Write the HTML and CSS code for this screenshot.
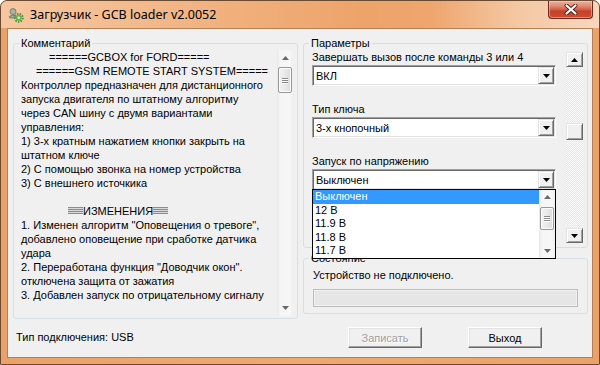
FILE: index.html
```html
<!DOCTYPE html>
<html lang="ru">
<head>
<meta charset="utf-8">
<title>Загрузчик - GCB loader v2.0052</title>
<link rel="stylesheet" href="styles.css">
</head>
<body>
<div class="window">
  <div class="titlebar">
    <svg class="app-icon" width="16" height="16" viewBox="0 0 16 16">
      <circle cx="5" cy="4.6" r="3" fill="#a7b3a4" stroke="#66745f" stroke-width="0.8"/>
      <path d="M1.2 9.5 Q5 6.8 8.4 9.2 L7.6 11 L1.6 11 Z" fill="#97a593" stroke="#66745f" stroke-width="0.7"/>
      <circle cx="10.8" cy="10.8" r="3.8" fill="none" stroke="#4e9a36" stroke-width="2.4" stroke-dasharray="1.5 1.1"/>
      <circle cx="10.8" cy="10.8" r="3" fill="#6db34d"/>
      <circle cx="10.8" cy="10.8" r="1.2" fill="#eef4e6"/>
    </svg>
    <span class="title">Загрузчик - GCB loader v2.0052</span>
    <div class="close-btn">
      <svg width="14" height="11" viewBox="0 0 14 11">
        <path d="M2.5 1.5 L11.5 9.5 M11.5 1.5 L2.5 9.5" stroke="#5a2114" stroke-width="4" stroke-linecap="round"/>
        <path d="M2.5 1.5 L11.5 9.5 M11.5 1.5 L2.5 9.5" stroke="#ffffff" stroke-width="2.2" stroke-linecap="round"/>
      </svg>
    </div>
  </div>
  <div class="client">
    <div class="col-left">
      <fieldset class="group group-comment">
        <legend>Комментарий</legend>
        <div class="memo">
          <div class="memo-text">
            <div class="ind1">======GCBOX for FORD=====</div>
            <div class="ind2">======GSM REMOTE START SYSTEM=====</div>
            <div>Контроллер предназначен для дистанционного</div>
            <div>запуска двигателя по штатному алгоритму</div>
            <div>через CAN шину с двумя вариантами</div>
            <div>управления:</div>
            <div>1) 3-х кратным нажатием кнопки закрыть на</div>
            <div>штатном ключе</div>
            <div>2) С помощью звонка на номер устройства</div>
            <div>3) С внешнего источкика</div>
            <div class="blank"></div>
            <div class="ind3"><span class="hatch"></span>ИЗМЕНЕНИЯ<span class="hatch"></span></div>
            <div>1. Изменен алгоритм "Оповещения о тревоге",</div>
            <div>добавлено оповещение при сработке датчика</div>
            <div>удара</div>
            <div>2. Переработана функция "Доводчик окон".</div>
            <div>отключена защита от зажатия</div>
            <div>3. Добавлен запуск по отрицательному сигналу</div>
          </div>
          <div class="tscroll memo-scroll">
            <div class="tarrow"><svg width="7" height="4" viewBox="0 0 7 4"><polygon points="0,4 3.5,0 7,4" fill="#6a6a6a"/></svg></div>
            <div class="ttrack"><div class="tthumb memo-thumb"><span></span><span></span><span></span></div></div>
            <div class="tarrow"><svg width="7" height="4" viewBox="0 0 7 4"><polygon points="0,0 7,0 3.5,4" fill="#6a6a6a"/></svg></div>
          </div>
        </div>
      </fieldset>
      <div class="conn">Тип подключения: USB</div>
    </div>

    <div class="col-right">
      <fieldset class="group group-params">
        <legend>Параметры</legend>
        <div class="scrollbox">
          <div class="params">
            <div class="field">
              <div class="field-label">Завершать вызов после команды 3 или 4</div>
              <div class="combo"><span class="combo-text">ВКЛ</span><span class="drop-btn"><svg width="7" height="4" viewBox="0 0 7 4"><polygon points="0,0 7,0 3.5,4" fill="#000"/></svg></span></div>
            </div>
            <div class="field">
              <div class="field-label">Тип ключа</div>
              <div class="combo"><span class="combo-text">3-х кнопочный</span><span class="drop-btn"><svg width="7" height="4" viewBox="0 0 7 4"><polygon points="0,0 7,0 3.5,4" fill="#000"/></svg></span></div>
            </div>
            <div class="field">
              <div class="field-label">Запуск по напряжению</div>
              <div class="combo open"><span class="combo-text">Выключен</span><span class="drop-btn"><svg width="7" height="4" viewBox="0 0 7 4"><polygon points="0,0 7,0 3.5,4" fill="#000"/></svg></span>
                <div class="droplist">
                  <div class="items">
                    <div class="item selected">Выключен</div>
                    <div class="item">12 В</div>
                    <div class="item">11.9 В</div>
                    <div class="item">11.8 В</div>
                    <div class="item">11.7 В</div>
                  </div>
                  <div class="tscroll list-scroll">
                    <div class="tarrow"><svg width="7" height="4" viewBox="0 0 7 4"><polygon points="0,4 3.5,0 7,4" fill="#6a6a6a"/></svg></div>
                    <div class="ttrack"><div class="tthumb list-thumb"><span></span><span></span><span></span></div></div>
                    <div class="tarrow"><svg width="7" height="4" viewBox="0 0 7 4"><polygon points="0,0 7,0 3.5,4" fill="#6a6a6a"/></svg></div>
                  </div>
                </div>
              </div>
            </div>
          </div>
          <div class="cscroll">
            <div class="cbtn"><svg width="7" height="4" viewBox="0 0 7 4"><polygon points="0,4 3.5,0 7,4" fill="#000"/></svg></div>
            <div class="ctrack"><div class="cthumb"></div></div>
            <div class="cbtn"><svg width="7" height="4" viewBox="0 0 7 4"><polygon points="0,0 7,0 3.5,4" fill="#000"/></svg></div>
          </div>
        </div>
      </fieldset>

      <fieldset class="group group-state">
        <legend>Состояние</legend>
        <div class="state-text">Устройство не подключено.</div>
        <div class="progress"></div>
      </fieldset>

      <div class="buttons">
        <div class="btn disabled">Записать</div>
        <div class="btn">Выход</div>
      </div>
    </div>
  </div>
</div>
</body>
</html>
```

FILE: styles.css
```css
html, body {
  margin: 0;
  padding: 0;
}
body {
  width: 600px;
  height: 365px;
  overflow: hidden;
  font-family: "Liberation Sans", Arial, sans-serif;
  font-size: 11px;
  color: #000;
  background: #ffffff;
}

/* ---------- window frame ---------- */
.window {
  box-sizing: border-box;
  width: 600px;
  height: 365px;
  border: 1px solid #6a4a30;
  border-radius: 7px 7px 0 0;
  background: linear-gradient(90deg, #eba26a 0%, #eea86f 50%, #eba26a 100%);
  display: flex;
  flex-direction: column;
  overflow: hidden;
}
.titlebar {
  height: 27px;
  flex: none;
  display: flex;
  align-items: flex-start;
  background: linear-gradient(90deg, #f6c7a0 0%, #f3bc8f 20%, #f0af7b 40%, #eda46b 60%, #eea66e 72%, #f4c7a2 86%, #f7d7bd 100%);
  border-radius: 6px 6px 0 0;
}
.app-icon {
  margin: 6px 0 0 7px;
  flex: none;
}
.title {
  margin: 5px 0 0 6px;
  font-family: "Noto Sans", "Open Sans", sans-serif;
  font-size: 12.5px;
  line-height: 18px;
  color: #000;
  white-space: nowrap;
}
.close-btn {
  margin-left: auto;
  margin-right: 6px;
  width: 45px;
  height: 18px;
  box-sizing: border-box;
  border: 1px solid #6e2a1c;
  border-top: none;
  border-radius: 0 0 4px 4px;
  background: linear-gradient(180deg, #e9b2a0 0%, #e08a74 30%, #d45e45 50%, #c54129 60%, #cc4d33 100%);
  box-shadow: inset 0 0 0 1px rgba(255, 220, 200, 0.45);
  display: flex;
  align-items: center;
  justify-content: center;
}

/* ---------- client area ---------- */
.client {
  flex: 1;
  margin: 0 6px 6px;
  border: 1px solid #b27f57;
  background: #f0f0f0;
  display: grid;
  grid-template-columns: 285px 285px;
  column-gap: 5px;
  padding: 8px 4px 0 5px;
  align-content: start;
}

.group {
  margin: 0;
  padding: 0;
  min-width: 0;
  border: 1px solid #d5dfe5;
  border-radius: 3px;
}
.group legend {
  margin-left: 5px;
  padding: 0 2px;
  line-height: 13px;
  font-size: 11px;
}

/* ---------- left: comment memo ---------- */
.col-left {
  display: flex;
  flex-direction: column;
}
.group-comment {
  height: 282px;
  box-sizing: border-box;
}
.memo {
  display: flex;
  height: 268px;
}
.memo-text {
  flex: 1;
  padding-left: 7px;
  line-height: 14px;
  white-space: nowrap;
  overflow: hidden;
}
.blank { height: 14px; }
.ind1 { padding-left: 28px; }
.ind2 { padding-left: 15px; }
.ind3 { padding-left: 47px; }
.hatch {
  display: inline-block;
  width: 15px;
  height: 7px;
  vertical-align: 1px;
  background: repeating-linear-gradient(0deg, #8c8c8c 0 1px, #d9d9d9 1px 2px);
}
.conn {
  margin: 11px 0 0 3px;
  line-height: 14px;
}

/* themed (Win7) scrollbars */
.tscroll {
  width: 16px;
  flex: none;
  display: flex;
  flex-direction: column;
  background: linear-gradient(90deg, #e9e9e9 0%, #f5f5f5 20%, #f7f7f7 80%, #efefef 100%);
}
.memo-scroll {
  margin: 0 4px 2px 0;
}
.tarrow {
  height: 16px;
  flex: none;
  display: flex;
  align-items: center;
  justify-content: center;
}
.ttrack {
  flex: 1;
}
.tthumb {
  box-sizing: border-box;
  margin: 0 1px;
  border: 1px solid #979797;
  border-radius: 2px;
  background: linear-gradient(90deg, #f3f3f3 0%, #e9e9e9 50%, #dcdcdc 100%);
  box-shadow: inset 0 0 0 1px #fbfbfb;
  display: flex;
  flex-direction: column;
  align-items: center;
  justify-content: center;
  gap: 1px;
}
.tthumb span {
  display: block;
  width: 6px;
  height: 1px;
  background: #8a8a8a;
  box-shadow: 0 1px 0 #ffffff;
}
.memo-thumb {
  margin-top: 1px;
  height: 26px;
}

/* ---------- right: parameters ---------- */
.col-right {
  display: flex;
  flex-direction: column;
}
.group-params {
  height: 211px;
  box-sizing: border-box;
}
.scrollbox {
  display: flex;
  height: 196px;
}
.params {
  flex: 1;
  padding-left: 8px;
}
.field {
  margin-bottom: 16px;
  width: 244px;
}
.field-label {
  line-height: 14px;
  white-space: nowrap;
}
.combo {
  position: relative;
  margin-top: 1px;
  height: 21px;
  box-sizing: border-box;
  background: #ffffff;
  border: 1px solid;
  border-color: #a0a0a0 #ffffff #ffffff #a0a0a0;
  box-shadow: inset 1px 1px 0 #696969, inset -1px -1px 0 #e3e3e3;
  display: flex;
  align-items: center;
}
.combo-text {
  flex: 1;
  padding-left: 3px;
  line-height: 14px;
}
.drop-btn {
  width: 16px;
  height: 17px;
  margin-right: 1px;
  box-sizing: border-box;
  background: #f0f0f0;
  border: 1px solid;
  border-color: #e3e3e3 #696969 #696969 #e3e3e3;
  box-shadow: inset 1px 1px 0 #ffffff, inset -1px -1px 0 #a0a0a0;
  display: flex;
  align-items: center;
  justify-content: center;
}
.droplist {
  position: absolute;
  top: 100%;
  left: -1px;
  right: -1px;
  z-index: 10;
  height: 70px;
  box-sizing: border-box;
  border: 1px solid #000000;
  background: #ffffff;
  display: flex;
}
.items {
  flex: 1;
}
.item {
  height: 13.6px;
  line-height: 13.6px;
  padding-left: 2px;
}
.item.selected {
  background: #3399ff;
  color: #ffffff;
}
.list-scroll .tarrow {
  height: 14px;
}
.list-thumb {
  margin-top: 3px;
  height: 23px;
}

/* classic scrollbar of the scroll box */
.cscroll {
  width: 17px;
  flex: none;
  margin: 2px 4px 3px 0;
  display: flex;
  flex-direction: column;
  background-color: #fbfbfb;
  background-image: conic-gradient(#e6e6e6 25%, #fbfbfb 0 50%, #e6e6e6 0 75%, #fbfbfb 0);
  background-size: 2px 2px;
}
.cbtn, .cthumb {
  box-sizing: border-box;
  background: #f0f0f0;
  border: 1px solid;
  border-color: #e3e3e3 #696969 #696969 #e3e3e3;
  box-shadow: inset 1px 1px 0 #ffffff, inset -1px -1px 0 #a0a0a0;
}
.cbtn {
  height: 15px;
  flex: none;
  display: flex;
  align-items: center;
  justify-content: center;
}
.ctrack {
  flex: 1;
}
.cthumb {
  margin-top: 56px;
  height: 17px;
}

/* ---------- state ---------- */
.group-state {
  margin-top: 4px;
  height: 62px;
  box-sizing: border-box;
}
.state-text {
  margin: 3px 0 0 9px;
  line-height: 14px;
}
.progress {
  margin: 7px 9px 0 9px;
  height: 18px;
  box-sizing: border-box;
  border: 1px solid #bcbcbc;
  background: #e6e6e6;
  box-shadow: inset 0 0 0 1px #f2f2f2;
}

/* ---------- buttons ---------- */
.buttons {
  margin-top: 13px;
  padding-left: 45px;
  display: flex;
  gap: 46px;
}
.btn {
  width: 74px;
  height: 21px;
  box-sizing: border-box;
  background: #f0f0f0;
  border: 1px solid;
  border-color: #ffffff #696969 #696969 #ffffff;
  box-shadow: inset -1px -1px 0 #a0a0a0, inset 1px 1px 0 #e3e3e3;
  display: flex;
  align-items: center;
  justify-content: center;
  line-height: 14px;
}
.btn.disabled {
  color: #a0a0a0;
  text-shadow: 1px 1px 0 #ffffff;
}
```
